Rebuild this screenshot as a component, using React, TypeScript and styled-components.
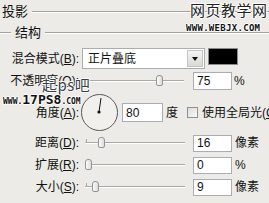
import React from 'react';
import styled, { createGlobalStyle } from 'styled-components';

const GlobalStyle = createGlobalStyle`
  html, body { margin: 0; padding: 0; background: #ecebe7; }
  body { font-family: "Liberation Sans", "Noto Sans CJK SC", sans-serif; }
`;

// 整个面板
const Panel = styled.div`
  position: relative;
  width: 269px;
  height: 203px;
  overflow: hidden;
  background: #ecebe7;
  color: #111;
  font-family: "Liberation Sans", "Noto Sans CJK SC", sans-serif;
  font-size: 12px;
  line-height: 1;
`;

// 带分隔线的标题
const GroupTitle = styled.div<{ $indent: number; $height: number }>`
  display: flex;
  align-items: center;
  gap: 4px;
  height: ${p => p.$height}px;
  padding-left: ${p => p.$indent}px;
  font-size: 13px;
`;

const Etched = styled.div<{ $w?: number }>`
  flex: ${p => (p.$w ? `0 0 ${p.$w}px` : '1')};
  height: 1px;
  background: #a4a29d;
  box-shadow: 0 1px 0 #fff;
`;

const Row = styled.div<{ $h: number }>`
  display: flex;
  align-items: center;
  height: ${p => p.$h}px;
  & > * { flex-shrink: 0; }
`;

const Label = styled.span<{ $w?: number }>`
  flex: 0 0 ${p => p.$w ?? 79}px;
  text-align: right;
  white-space: nowrap;
`;

const Select = styled.div`
  display: flex;
  align-items: stretch;
  width: 123px;
  height: 21px;
  margin-left: 3px;
  box-sizing: border-box;
  border: 1px solid #a9aeb4;
  background: #fff;
`;

const SelectText = styled.span`
  flex: 1;
  padding-left: 5px;
  display: flex;
  align-items: center;
`;

const SelectButton = styled.span`
  width: 16px;
  margin: 1px;
  background: linear-gradient(#f4f4f2, #d9d8d4);
  border: 1px solid #c6c5c0;
  box-sizing: border-box;
  display: flex;
  align-items: center;
  justify-content: center;
  &::after {
    content: '';
    border-left: 3.5px solid transparent;
    border-right: 3.5px solid transparent;
    border-top: 4px solid #111;
  }
`;

const Swatch = styled.div`
  width: 30px;
  height: 17px;
  margin-left: 3px;
  align-self: flex-start;
  background: #000;
  border: 1px solid #8c8c8c;
  box-sizing: border-box;
`;

// 滑块
const Slider = styled.div<{ $start: number }>`
  position: relative;
  width: 100px;
  height: 14px;
  margin-left: ${p => p.$start}px;
  &::before {
    content: '';
    position: absolute;
    left: 0;
    right: 0;
    top: 6px;
    height: 1px;
    background: #a9a8a4;
    box-shadow: 0 1px 0 #fff;
  }
`;

const Tick = styled.span`
  position: absolute;
  left: 1px;
  top: 3px;
  width: 1px;
  height: 4px;
  background: #a9a8a4;
`;

const Thumb = styled.span`
  position: absolute;
  top: 1px;
  width: 7px;
  height: 11px;
  box-sizing: border-box;
  border: 1px solid #8f9499;
  border-radius: 3px 3px 2px 2px;
  background: linear-gradient(90deg, #fbfbfa, #dcdcd8);
`;

const NumInput = styled.div<{ $w: number; $h: number; $gap: number }>`
  width: ${p => p.$w}px;
  height: ${p => p.$h}px;
  margin-left: ${p => p.$gap}px;
  box-sizing: border-box;
  border: 1px solid #a9aeb4;
  background: #fff;
  padding-left: 3px;
  display: flex;
  align-items: center;
`;

const Unit = styled.span<{ $gap: number }>`
  margin-left: ${p => p.$gap}px;
  white-space: nowrap;
`;

const Dial = styled.div`
  position: relative;
  width: 37px;
  height: 37px;
  margin-left: 2px;
  box-sizing: border-box;
  border: 1.5px solid #5a5a5a;
  border-radius: 50%;
  background: #f1f0ed;
`;

const DialHand = styled.svg`
  position: absolute;
  left: 0;
  top: 0;
`;

const Check = styled.span`
  width: 11px;
  height: 11px;
  margin-left: 9px;
  box-sizing: border-box;
  border: 1px solid #8d9196;
  background: linear-gradient(135deg, #dcdcd7, #fafafa);
`;

// 水印
const Mark = styled.div<{ $x: number; $y: number }>`
  position: absolute;
  left: ${p => p.$x}px;
  top: ${p => p.$y}px;
  white-space: nowrap;
  text-shadow: -1px 0 #fff, 1px 0 #fff, 0 -1px #fff, 0 1px #fff;
`;

const MarkCn = styled.span<{ $size: number; $color: string }>`
  font-family: "Noto Sans CJK SC", sans-serif;
  font-size: ${p => p.$size}px;
  color: ${p => p.$color};
  letter-spacing: 0.5px;
`;

const MarkUrl = styled.span<{ $size: number; $spacing?: number }>`
  font-family: "DejaVu Sans Mono", monospace;
  font-weight: bold;
  font-size: ${p => p.$size}px;
  letter-spacing: ${p => p.$spacing ?? 0}px;
  color: #111;
`;

const Body = styled.div`
  display: flex;
  flex-direction: column;
`;

const sliders = [
  { name: '距离', key: 'D', pos: 13, value: '16', unit: '像素', tick: true },
  { name: '扩展', key: 'R', pos: 0, value: '0', unit: '%', tick: false },
  { name: '大小', key: 'S', pos: 7, value: '9', unit: '像素', tick: true },
];

export default function App() {
  return (
    <Panel>
      <GlobalStyle />
      <GroupTitle $indent={2} $height={23}>
        <span>投影</span>
        <Etched />
      </GroupTitle>
      <GroupTitle $indent={0} $height={19}>
        <Etched $w={11} />
        <span>结构</span>
        <Etched />
      </GroupTitle>
      <Body>
        <Row $h={6} />
        <Row $h={21}>
          <Label>混合模式(<u>B</u>):</Label>
          <Select>
            <SelectText>正片叠底</SelectText>
            <SelectButton />
          </Select>
          <Swatch />
        </Row>
        <Row $h={24}>
          <Label>不透明度(<u>O</u>):</Label>
          <Slider $start={5}>
            <Thumb style={{ left: 72 }} />
          </Slider>
          <NumInput $w={39} $h={18} $gap={9}>75</NumInput>
          <Unit $gap={2}>%</Unit>
        </Row>
        <Row $h={39}>
          <Label>角度(<u>A</u>):</Label>
          <Dial>
            <DialHand width="34" height="34" viewBox="0 0 34 34">
              <line x1="17" y1="17" x2="19" y2="3" stroke="#111" strokeWidth="1" />
              <circle cx="17" cy="17" r="1.6" fill="#111" />
            </DialHand>
          </Dial>
          <NumInput $w={41} $h={19} $gap={4}>80</NumInput>
          <Unit $gap={3}>度</Unit>
          <Check />
          <Unit $gap={4}>使用全局光(<u>G</u>)</Unit>
        </Row>
        {sliders.map(s => (
          <Row $h={22} key={s.key}>
            <Label>{s.name}(<u>{s.key}</u>):</Label>
            <Slider $start={6}>
              {s.tick && <Tick />}
              <Thumb style={{ left: s.pos }} />
            </Slider>
            <NumInput $w={39} $h={17} $gap={8}>{s.value}</NumInput>
            <Unit $gap={3}>{s.unit}</Unit>
          </Row>
        ))}
      </Body>
      <Mark $x={190} $y={2}>
        <MarkCn $size={15} $color="#222">网页教学网</MarkCn>
      </Mark>
      <Mark $x={186} $y={21}>
        <MarkUrl $size={9} $spacing={0.3}>WWW.WEBJX.COM</MarkUrl>
      </Mark>
      <Mark $x={42} $y={77}>
        <MarkCn $size={15} $color="#3a3f4a">起ps吧</MarkCn>
      </Mark>
      <Mark $x={3} $y={93}>
        <MarkUrl $size={8}>WWW.</MarkUrl>
        <MarkUrl $size={13}>17PS8</MarkUrl>
        <MarkUrl $size={8}>.COM</MarkUrl>
      </Mark>
    </Panel>
  );
}
